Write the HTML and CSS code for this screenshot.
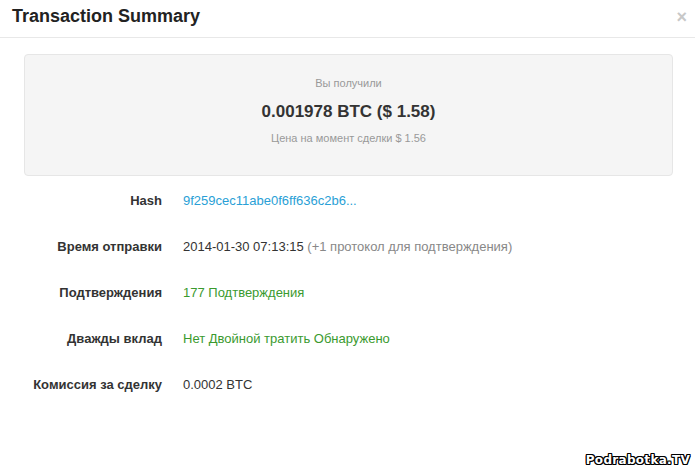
FILE: index.html
```html
<!DOCTYPE html>
<html lang="ru">
<head>
    <meta charset="utf-8">
    <link rel="stylesheet" href="styles.css">
</head>
<body>
<div class="modal">
    <header class="modal-header">
        <h3>Transaction Summary</h3>
        <span class="close">&times;</span>
    </header>
    <section class="modal-body">
        <div class="well">
            <div class="muted">Вы получили</div>
            <div class="amount">0.001978 BTC ($ 1.58)</div>
            <div class="muted">Цена на момент сделки $ 1.56</div>
        </div>
        <dl class="details">
            <dt>Hash</dt>
            <dd><a href="#">9f259cec11abe0f6ff636c2b6...</a></dd>
            <dt>Время отправки</dt>
            <dd>2014-01-30 07:13:15 <span class="gray">(+1 протокол для подтверждения)</span></dd>
            <dt>Подтверждения</dt>
            <dd class="ok">177 Подтверждения</dd>
            <dt>Дважды вклад</dt>
            <dd class="ok">Нет Двойной тратить Обнаружено</dd>
            <dt>Комиссия за сделку</dt>
            <dd>0.0002 BTC</dd>
        </dl>
    </section>
</div>
<div class="watermark">Podrabotka.TV</div>
</body>
</html>
```

FILE: styles.css
```css
body {
    font-family: "Liberation Sans", Arial, sans-serif;
    margin: 0;
    padding: 0;
    font-size: 13px;
    color: #333;
    background: #fff;
    width: 695px;
    height: 471px;
    overflow: hidden;
    position: relative;
}
.modal-header {
    display: flex;
    justify-content: space-between;
    align-items: flex-start;
    padding: 5px 12px 10px 12px;
    border-bottom: 1px solid #e8e8e8;
}
.modal-header h3 {
    margin: 0;
    font-size: 18px;
    line-height: 22px;
    font-weight: bold;
    color: #222;
}
.close {
    font-size: 18px;
    font-weight: bold;
    line-height: 16px;
    color: #c8c8c8;
    margin-top: 4px;
    margin-right: -4px;
}
.modal-body {
    padding: 16px 22px 0 24px;
}
.well {
    background-color: #f5f5f5;
    border: 1px solid #e6e6e6;
    border-radius: 4px;
    height: 122px;
    box-sizing: border-box;
    padding-top: 21px;
    text-align: center;
}
.muted {
    font-size: 11px;
    line-height: 14px;
    color: #999;
}
.amount {
    font-size: 17px;
    font-weight: bold;
    color: #333;
    line-height: 20px;
    margin: 12px 0 9px;
}
.details {
    display: grid;
    grid-template-columns: 138px 1fr;
    column-gap: 21px;
    row-gap: 30px;
    margin: 17px 0 0;
    line-height: 16px;
}
.details dt {
    font-weight: bold;
    text-align: right;
}
.details dd {
    margin: 0;
    color: #333;
}
.details a {
    color: #2a9fd6;
    text-decoration: none;
}
.gray {
    color: #888;
}
.ok {
    color: #3a9a2e !important;
}
.watermark {
    position: absolute;
    right: 5px;
    bottom: 4px;
    font-family: "DejaVu Sans", sans-serif;
    font-weight: bold;
    font-size: 12px;
    letter-spacing: 0.3px;
    color: #fff;
    text-shadow: 1px 0 0 #000, -1px 0 0 #000, 0 1px 0 #000, 0 -1px 0 #000,
        1px 1px 0 #000, -1px -1px 0 #000, 1px -1px 0 #000, -1px 1px 0 #000;
}
```
